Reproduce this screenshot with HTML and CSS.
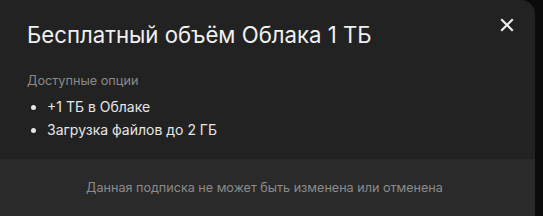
FILE: index.html
```html
<!DOCTYPE html>
<html lang="ru">
<head>
    <meta charset="UTF-8">
    <title>Облако</title>
    <link rel="stylesheet" href="styles.css">
</head>
<body>
    <div class="modal">
        <div class="modal-body">
            <div class="modal-head">
                <h1>Бесплатный объём Облака 1 ТБ</h1>
                <button class="close" aria-label="Закрыть">
                    <svg width="14" height="14" viewBox="0 0 14 14"><path d="M2 2L12 12M12 2L2 12" stroke="#ededed" stroke-width="2.2" stroke-linecap="square"/></svg>
                </button>
            </div>
            <div class="options-title">Доступные опции</div>
            <ul class="options">
                <li>+1 ТБ в Облаке</li>
                <li>Загрузка файлов до 2 ГБ</li>
            </ul>
        </div>
        <div class="modal-foot">Данная подписка не может быть изменена или отменена</div>
    </div>
</body>
</html>
```

FILE: styles.css
```css
body, html {
    margin: 0;
    padding: 0;
    background-color: #0b0b0b;
    font-family: Inter, "Noto Sans", sans-serif;
}
.modal {
    width: 535px;
    height: 216px;
    background-color: #222222;
    border-top-right-radius: 14px;
    overflow: hidden;
    display: flex;
    flex-direction: column;
}
.modal-body {
    padding: 20px 21px 0 27px;
    height: 139px;
}
.modal-head {
    display: flex;
    justify-content: space-between;
    align-items: flex-start;
}
.modal-head h1 {
    margin: 0;
    font-size: 22.2px;
    font-weight: 400;
    color: #f0f0f0;
    line-height: 30px;
}
.close {
    background: none;
    border: none;
    padding: 0;
    margin-top: -2px;
    cursor: pointer;
    line-height: 0;
}
.options-title {
    margin-top: 22px;
    font-size: 12.7px;
    color: #8a8a8a;
    line-height: 18px;
}
.options {
    margin: 5px 0 0;
    padding: 0 0 0 20px;
    color: #e6e6e6;
    font-size: 14px;
    line-height: 23px;
}
.modal-foot {
    flex: 1;
    background-color: #2a2a2a;
    display: flex;
    align-items: center;
    justify-content: center;
    padding-right: 6px;
    font-size: 12.6px;
    color: #8c8c8c;
}
```
